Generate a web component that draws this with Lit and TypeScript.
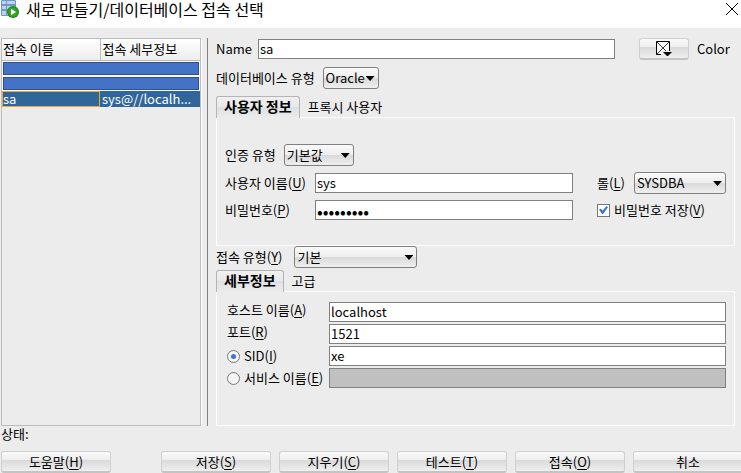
import { LitElement, html, css, svg } from "lit";
import { customElement, state } from "lit/decorators.js";

const playIcon = svg`
  <rect x="1" y="0" width="15" height="16" rx="1" fill="#6f98c8"/>
  <path d="M2 1h4v3H2zM7 1h8v3H7zM2 6h4v3H2zM7 6h8v3H7zM2 11h4v4H2zM7 11h8v4H7z" fill="#bcd3ee"/>
  <circle cx="13" cy="12" r="6" fill="#188a10"/>
  <circle cx="13" cy="12" r="4.8" fill="#35a822"/>
  <path d="M11 8.8v6.4l5-3.2z" fill="#fff"/>`;

@customElement("app-root")
export class AppRoot extends LitElement {
  @state() private target: "sid" | "service" = "sid";

  static styles = css`
    :host {
      display: block;
      font: 13px/16px "Noto Sans CJK KR", sans-serif;
      color: #000;
      background: #ececec;
    }
    * { box-sizing: border-box; }
    .window { display: flex; flex-direction: column; min-height: 100vh; overflow: hidden; }
    .title { display: flex; align-items: flex-start; height: 28px; background: #fff; padding-right: 3px; }
    .title h1 { flex: 1; margin: 0 0 0 7px; font-size: 16px; line-height: 18px; font-weight: 400; }
    .close { border: 0; padding: 0; background: none; width: 12px; height: 18px; }
    svg { display: block; }
    .body { flex: 1; display: flex; padding: 10px 6px 0 1px; }
    .list { width: 200px; border: 1px solid #bcbcbc; }
    .split { width: 15px; display: flex; border-left: 1px solid #fff; }
    .split::before { content: ""; width: 1px; margin-left: 5px; background: #808080; }
    table { width: 100%; border-collapse: collapse; table-layout: fixed; background: #f8f8f8; }
    th, td { font-weight: 400; text-align: left; padding: 0 0 0 2px; white-space: nowrap; }
    th { height: 21px; background: linear-gradient(#fff, #ededed); border-bottom: 1px solid #bcbcbc; }
    th:first-child { width: 98px; padding-left: 1px; }
    th + th { border-left: 1px solid #bcbcbc; }
    .hidden td { height: 15px; padding: 1px 1px 1px; }
    .mask { height: 13px; background: #4472c4; border: 1px solid #2f528f; }
    .picked td { height: 16px; line-height: 14px; background: #306698; color: #fff; border-top: 1px solid #306698; }
    .picked td:first-child { padding-left: 1px; outline: 1px solid #f5a623; outline-offset: -1px; }
    .form { flex: 1; min-width: 0; display: flex; flex-direction: column; }
    .row { display: flex; align-items: center; gap: 8px; height: 22px; }
    .name { margin-bottom: 7px; gap: 6px; }
    .kind { margin-bottom: 7px; }
    .grow { flex: 1; min-width: 0; }
    .swatch { width: 50px; height: 22px; margin: 0 2px 0 18px; display: flex; align-items: center; justify-content: center; }
    .tint { width: 38px; }
    input[type="text"], input[type="password"] {
      height: 20px; width: 100%; border: 1px solid #808080; border-radius: 0; padding: 0 1px 2px;
      font: inherit; color: inherit; background: #fff; outline: 0;
    }
    input[type="password"] { font-size: 17px; padding-bottom: 0; }
    input:disabled { background: #c0c0c0; }
    .combo { position: relative; display: block; height: 22px; }
    .combo::after {
      content: ""; position: absolute; right: 4px; top: 9px; width: 9px; height: 5px;
      background: #000; clip-path: polygon(0 0, 100% 0, 50% 100%); pointer-events: none;
    }
    select {
      appearance: none; width: 100%; height: 22px; padding: 0 2px; font: inherit; color: inherit;
      border: 1px solid #808080; border-radius: 3px;
      background: linear-gradient(#fafafa, #eee 48%, #d9d9d9 50%, #efefef);
    }
    .w56 { width: 56px; } .w70 { width: 70px; } .w92 { width: 92px; } .w123 { width: 123px; }
    button.push {
      font: inherit; color: inherit; height: 22px; padding: 0; border: 1px solid #d0d0d0; border-bottom: 2px solid #c4c4c4; border-radius: 3px;
      background: linear-gradient(#fafafa, #eee 40%, #dadada 44%, #efefef);
    }
    .tabs { display: flex; height: 21px; }
    .tab { font: inherit; color: inherit; background: none; border: 0; padding: 0 8px; height: 21px; }
    .tab.on {
      height: 22px; font-size: 14px; font-weight: 700; padding: 0 7px 3px; border: 1px solid #b4b4b4; border-bottom: 0;
      border-radius: 3px 3px 0 0; background: linear-gradient(#f0f0f0, #e9e9e9 48%, #dde0e2 50%, #ececec); z-index: 1;
    }
    .pane { border: 1px solid #fff; }
    .login { padding: 26px 8px 25px; display: grid; grid-template-columns: 90px 1fr 153px; row-gap: 6px; align-items: center; }
    .login .row:first-child { grid-column: 1 / -1; }
    .side { display: flex; align-items: center; margin-left: 24px; }
    .side .combo { margin-left: auto; }
    .type { margin-bottom: 2px; gap: 12px; }
    .detail { flex: 1; padding: 10px 8px 37px 10px; display: grid; grid-template-columns: 102px 1fr; grid-auto-rows: 20px; row-gap: 2px; }
    .detail label { line-height: 16px; }
    .opt { display: flex; align-items: center; white-space: nowrap; }
    .opt input, .side input { appearance: none; flex: none; width: 13px; height: 13px; margin: 0 4px 0 0; border: 1px solid #777; background: #f6f6f6; display: grid; place-content: center; }
    .opt input { border-radius: 50%; }
    .opt input:checked::after { content: ""; width: 5px; height: 5px; border-radius: 50%; background: #3f74cf; }
    .side input { background: #fff; }
    .side input:checked::after { content: ""; width: 9px; height: 8px; background: #3a6fcd; clip-path: polygon(0 45%, 22% 35%, 40% 60%, 85% 0, 100% 15%, 45% 100%, 35% 100%); }
    .status { height: 15px; padding-left: 1px; }
    .actions { display: flex; gap: 8px; margin: 10px -2px 0 1px; height: 22px; }
    .actions .push { width: 110px; flex: 0 1 110px; }
    .actions .push:first-child { margin-right: auto; }
    u { text-underline-offset: 2px; text-decoration-skip-ink: none; }
  `;

  private key(k: string) {
    return html`(<u>${k}</u>)`;
  }

  render() {
    return html`
      <div class="window">
        <header class="title">
          <svg width="19" height="19" viewBox="0 0 19 19" aria-hidden="true">${playIcon}</svg>
          <h1>새로 만들기/데이터베이스 접속 선택</h1>
          <button class="close" aria-label="닫기">
            <svg width="12" height="18" viewBox="0 0 12 18"><path d="M0 3l12 12M12 3L0 15" stroke="#000"/></svg>
          </button>
        </header>
        <main class="body">
          <div class="list">
            <table>
              <thead><tr><th>접속 이름</th><th>접속 세부정보</th></tr></thead>
              <tbody>
                <tr class="hidden"><td colspan="2"><div class="mask"></div></td></tr>
                <tr class="hidden"><td colspan="2"><div class="mask"></div></td></tr>
                <tr class="picked"><td>sa</td><td>sys@//localh...</td></tr>
              </tbody>
            </table>
          </div>
          <div class="split"></div>
          <section class="form">
            <div class="row name">
              <label for="name">Name</label>
              <span class="grow"><input id="name" type="text" value="sa"></span>
              <button class="push swatch" aria-labelledby="tint">
                <svg width="16" height="16" viewBox="0 0 16 16">
                  <path d="M1 1h12v12H1z" fill="#fafafa"/>
                  <path d="M1 1l12 12M13 1L1 13" fill="none" stroke="#000" stroke-width=".8"/>
                  <path d="M5 13.5H.5V.5h13V10" fill="none" stroke="#000"/>
                  <path d="M6 10h10v1l-4 4h-2l-4-4z" fill="#e4e4e4"/>
                  <path d="M7 11h9l-4 4h-1z"/>
                </svg>
              </button>
              <span class="tint" id="tint">Color</span>
            </div>
            <div class="row kind">
              <label for="kind">데이터베이스 유형</label>
              <span class="combo w56"><select id="kind"><option>Oracle</option></select></span>
            </div>
            <div class="tabs"><button class="tab on">사용자 정보</button><button class="tab">프록시 사용자</button></div>
            <div class="pane login">
              <div class="row">
                <label for="auth">인증 유형</label>
                <span class="combo w70"><select id="auth"><option>기본값</option></select></span>
              </div>
              <label for="user">사용자 이름${this.key("U")}</label>
              <input id="user" type="text" value="sys">
              <div class="side">
                <label for="role">롤${this.key("L")}</label>
                <span class="combo w92"><select id="role"><option>SYSDBA</option></select></span>
              </div>
              <label for="pass">비밀번호${this.key("P")}</label>
              <input id="pass" type="password" value="password1">
              <label class="side"><input type="checkbox" checked>비밀번호 저장${this.key("V")}</label>
            </div>
            <div class="row type">
              <label for="type">접속 유형${this.key("Y")}</label>
              <span class="combo w123"><select id="type"><option>기본</option></select></span>
            </div>
            <div class="tabs"><button class="tab on">세부정보</button><button class="tab">고급</button></div>
            <div class="pane detail">
              <label for="host">호스트 이름${this.key("A")}</label>
              <input id="host" type="text" value="localhost">
              <label for="port">포트${this.key("R")}</label>
              <input id="port" type="text" value="1521">
              <label class="opt"><input type="radio" name="target" .checked=${this.target === "sid"} @change=${() => (this.target = "sid")}>SID${this.key("I")}</label>
              <input type="text" aria-label="SID" value="xe" ?disabled=${this.target !== "sid"}>
              <label class="opt"><input type="radio" name="target" .checked=${this.target === "service"} @change=${() => (this.target = "service")}>서비스 이름${this.key("E")}</label>
              <input type="text" aria-label="서비스 이름" ?disabled=${this.target !== "service"}>
            </div>
          </section>
        </main>
        <div class="status">상태:</div>
        <footer class="actions">
          <button class="push">도움말${this.key("H")}</button>
          <button class="push">저장${this.key("S")}</button>
          <button class="push">지우기${this.key("C")}</button>
          <button class="push">테스트${this.key("T")}</button>
          <button class="push">접속${this.key("O")}</button>
          <button class="push">취소</button>
        </footer>
      </div>
    `;
  }
}
